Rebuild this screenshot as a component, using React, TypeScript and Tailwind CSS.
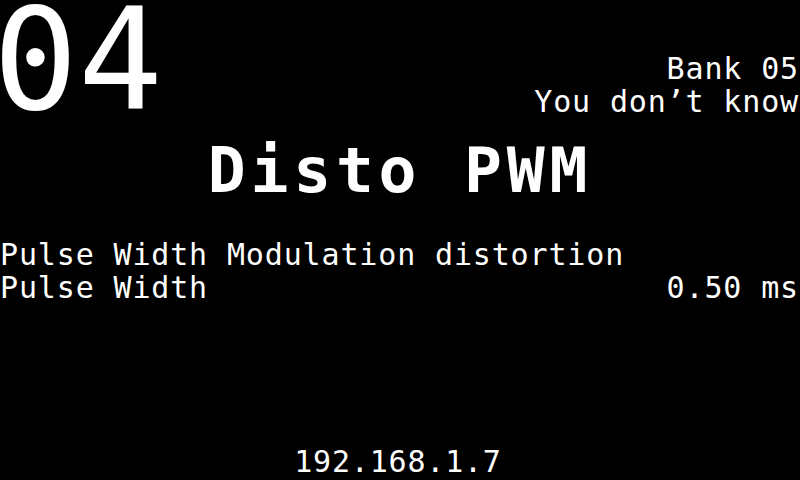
const mono = "font-['DejaVu_Sans_Mono',monospace]";

export default function App() {
  return (
    <div className={`w-[800px] h-[480px] bg-black text-white overflow-hidden flex flex-col ${mono}`}>
      <div className="flex justify-between">
        <div className="text-[141px] leading-[121px] -ml-[7px]">04</div>
        <div className="flex flex-col items-end pt-[52px] text-[30px] leading-[33px] tracking-[0.85px] mr-[1px]">
          <span>Bank 05</span>
          <span>You don’t know</span>
        </div>
      </div>

      <h1 className="mt-[18px] text-center font-bold text-[63px] leading-[64px] tracking-[4.8px]">
        Disto PWM
      </h1>

      <div className="mt-[35px] text-[30px] leading-[33px] tracking-[0.85px]">
        <div>Pulse Width Modulation distortion</div>
        <div className="flex justify-between mr-[1px]">
          <span>Pulse Width</span>
          <span>0.50 ms</span>
        </div>
      </div>

      <div className="mt-auto mb-[2px] pr-[4px] text-center text-[30px] leading-[33px] tracking-[0.8px]">
        192.168.1.7
      </div>
    </div>
  );
}
